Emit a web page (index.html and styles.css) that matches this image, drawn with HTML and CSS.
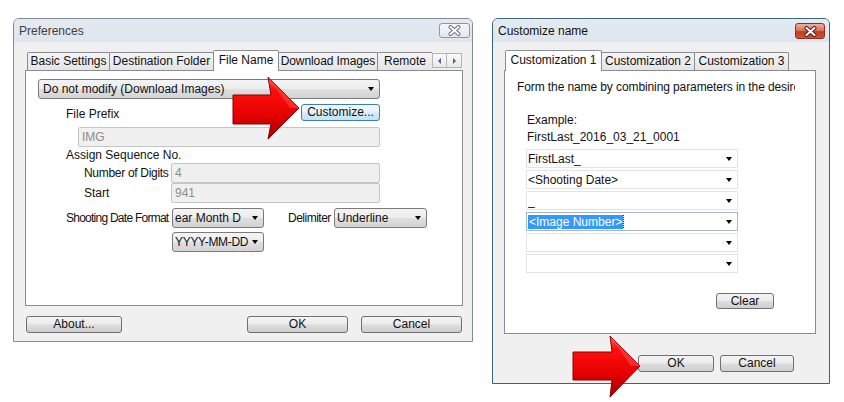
FILE: index.html
```html
<!DOCTYPE html>
<html>
<head>
<meta charset="utf-8">
<link rel="stylesheet" href="styles.css">
</head>
<body>
<div class="stage">
  <section class="win prefs">
    <header class="titlebar">
      <span class="title title-inactive">Preferences</span>
      <span class="close close-inactive">
        <svg width="13" height="11" viewBox="0 0 13 11"><path d="M2.5 2 L10.5 9 M10.5 2 L2.5 9" stroke="#6a727d" stroke-width="4" stroke-linecap="round"/><path d="M2.5 2 L10.5 9 M10.5 2 L2.5 9" stroke="#fff" stroke-width="2" stroke-linecap="round"/></svg>
      </span>
    </header>
    <div class="client prefs-client">
      <div class="tabrow">
        <div class="tabs">
          <div class="tab t-basic">Basic Settings</div>
          <div class="tab t-dest">Destination Folder</div>
          <div class="tab sel t-file">File Name</div>
          <div class="tab t-down">Download Images</div>
          <div class="tab t-remote">Remote</div>
        </div>
        <div class="scroll">
          <span class="sbtn"><i class="tri-l"></i></span>
          <span class="sbtn"><i class="tri-r"></i></span>
        </div>
      </div>
      <div class="panel prefs-panel">
        <div class="combo main-combo"><span class="txt">Do not modify (Download Images)</span><span class="arrow"></span></div>
        <div class="row-prefix">
          <span class="lbl lbl-l1">File Prefix</span>
          <div class="btn btn-focus btn-customize">Customize...</div>
        </div>
        <div class="input input-img">IMG</div>
        <div class="lbl lbl-l1 lbl-assign">Assign Sequence No.</div>
        <div class="field-row">
          <span class="lbl field-lbl tight">Number of Digits</span>
          <div class="input input-fill">4</div>
        </div>
        <div class="field-row">
          <span class="lbl field-lbl">Start</span>
          <div class="input input-fill">941</div>
        </div>
        <div class="date-row">
          <span class="lbl date-lbl">Shooting Date Format</span>
          <div class="combo small-combo"><span class="txt">ear Month D</span><span class="arrow"></span></div>
          <span class="lbl delim-lbl">Delimiter</span>
          <div class="combo delim-combo"><span class="txt">Underline</span><span class="arrow"></span></div>
        </div>
        <div class="combo small-combo date2"><span class="txt tight">YYYY-MM-DD</span><span class="arrow"></span></div>
      </div>
      <div class="btnrow prefs-btns">
        <div class="btn btn-about">About...</div>
        <span class="spacer"></span>
        <div class="btn btn-wide">OK</div>
        <div class="btn btn-wide btn-cancel">Cancel</div>
      </div>
    </div>
  </section>

  <section class="win cust">
    <header class="titlebar">
      <span class="title">Customize name</span>
      <span class="close close-active">
        <svg width="13" height="11" viewBox="0 0 13 11"><path d="M2.5 2 L10.5 9 M10.5 2 L2.5 9" stroke="#5a1a10" stroke-width="4" stroke-linecap="round"/><path d="M2.5 2 L10.5 9 M10.5 2 L2.5 9" stroke="#fff" stroke-width="2" stroke-linecap="round"/></svg>
      </span>
    </header>
    <div class="client cust-client">
      <div class="tabrow">
        <div class="tabs tabs-cust">
          <div class="tab sel t-c1">Customization 1</div>
          <div class="tab t-c2">Customization 2</div>
          <div class="tab t-c3">Customization 3</div>
        </div>
      </div>
      <div class="panel cust-panel">
        <div class="intro">Form the name by combining parameters in the desired order.</div>
        <div class="example">Example:</div>
        <div class="example example-val">FirstLast_2016_03_21_0001</div>
        <div class="clist">
          <div class="ccombo"><span class="txt">FirstLast_</span><span class="arrow"></span></div>
          <div class="ccombo"><span class="txt">&lt;Shooting Date&gt;</span><span class="arrow"></span></div>
          <div class="ccombo"><span class="txt">_</span><span class="arrow"></span></div>
          <div class="ccombo ccombo-focus"><span class="txt"><span class="hl">&lt;Image Number&gt;</span></span><span class="arrow"></span></div>
          <div class="ccombo"><span class="txt"></span><span class="arrow"></span></div>
          <div class="ccombo"><span class="txt"></span><span class="arrow"></span></div>
        </div>
        <div class="btn btn-clear">Clear</div>
      </div>
      <div class="btnrow cust-btns">
        <div class="btn btn-ok2">OK</div>
        <div class="btn btn-cancel2">Cancel</div>
      </div>
    </div>
  </section>

  <svg class="arrows" width="844" height="402" viewBox="0 0 844 402">
    <defs>
      <linearGradient id="ag" x1="0" y1="0" x2="0" y2="1">
        <stop offset="0" stop-color="#ff6a6a"/>
        <stop offset="0.2" stop-color="#ff1010"/>
        <stop offset="0.6" stop-color="#e80000"/>
        <stop offset="1" stop-color="#a00000"/>
      </linearGradient>
    </defs>
    <path d="M233 95 L271 95 L268 77 L299 108 L268 139 L271 124 L233 124 Z" fill="url(#ag)" stroke="#8a0000" stroke-width="1"/>
    <path d="M268 77 L299 108 L290 108 Z" fill="#ff5050" opacity="0.5"/>
    <path d="M573 352 L612 352 L610 336 L640 366 L610 397 L612 380 L573 380 Z" fill="url(#ag)" stroke="#8a0000" stroke-width="1"/>
    <path d="M610 336 L640 366 L631 366 Z" fill="#ff5050" opacity="0.5"/>
  </svg>
</div>
</body>
</html>
```

FILE: styles.css
```css
* { box-sizing: border-box; }

body {
  margin: 0;
  background: #fff;
  font: 12px "Liberation Sans", Arial, sans-serif;
  color: #111;
}

.stage {
  position: relative;
  width: 844px;
  height: 402px;
  overflow: hidden;
  display: flex;
  align-items: flex-start;
  gap: 19px;
  padding: 18px 0 0 13px;
}

.win {
  display: flex;
  flex-direction: column;
  border: 1px solid #838b94;
  border-radius: 6px 6px 0 0;
  background: #f0f0f0;
}
.prefs { width: 460px; height: 324px; }
.cust { width: 338px; height: 366px; border-color: #3b6579; }

.titlebar {
  height: 23px;
  flex: none;
  display: flex;
  align-items: flex-start;
  background: linear-gradient(#e4eaf1, #dde5ee);
  border-radius: 5px 5px 0 0;
}
.title { line-height: 24px; padding-left: 5px; color: #111; }
.title-inactive { color: #404040; }

.close {
  margin-left: auto;
  margin-top: 4px;
  width: 31px;
  height: 15px;
  border-radius: 3px;
  display: flex;
  align-items: center;
  justify-content: center;
}
.close-inactive {
  margin-right: 2px;
  border: 1px solid #8e97a2;
  background: linear-gradient(#f5f7f9, #e3e8ee);
}
.close-active {
  margin-right: 4px;
  width: 30px;
  height: 16px;
  border: 1px solid #8b3020;
  background: linear-gradient(#eab1a3 0%, #d9745f 45%, #c43c22 55%, #c9553a 100%);
}

.client {
  flex: 1;
  display: flex;
  flex-direction: column;
  padding: 8px 9px 0 11px;
}
.cust-client { padding: 8px 13px 0 11px; }

.tabrow {
  display: flex;
  height: 21px;
  margin-bottom: -1px;
  position: relative;
  z-index: 1;
}
.tabs {
  flex: 1;
  display: flex;
  align-items: flex-end;
  overflow: hidden;
  padding-left: 2px;
}
.tabs-cust { padding-left: 1px; }

.tab {
  flex: none;
  height: 18px;
  margin-bottom: 1px;
  margin-left: -1px;
  border: 1px solid #898c95;
  border-bottom: 0;
  border-radius: 2px 2px 0 0;
  background: linear-gradient(#f5f5f5, #e4e4e4);
  line-height: 17px;
  text-align: center;
  white-space: nowrap;
  overflow: hidden;
}
.tab:first-child { margin-left: 0; }
.tab.sel {
  height: 21px;
  margin-bottom: 0;
  background: #fff;
  line-height: 18px;
}
.t-basic { width: 83px; }
.t-dest { width: 105px; }
.t-file { width: 66px; }
.t-down { width: 100px; letter-spacing: -0.1px; }
.t-remote { width: 60px; text-align: left; padding-left: 6px; }
.t-c1 { width: 97px; }
.t-c2 { width: 94px; }
.t-c3 { width: 95px; }

.scroll {
  flex: none;
  display: flex;
  align-items: flex-start;
  padding-top: 3px;
  padding-right: 1px;
}
.sbtn {
  width: 15px;
  height: 15px;
  border: 1px solid #b5b5b5;
  background: linear-gradient(#fafafa, #e8e8e8);
  display: flex;
  align-items: center;
  justify-content: center;
}
.sbtn + .sbtn { border-left: 0; }
.tri-l, .tri-r { width: 0; height: 0; border-top: 3px solid transparent; border-bottom: 3px solid transparent; }
.tri-l { border-right: 3px solid #4a6388; }
.tri-r { border-left: 3px solid #4a6388; }

.panel {
  border: 1px solid #898c95;
  background: #fff;
  display: flex;
  flex-direction: column;
  align-items: flex-start;
}
.prefs-panel { height: 236px; padding: 8px 0 0 12px; }
.cust-panel { height: 264px; padding: 9px 0 0 12px; }

.lbl { white-space: nowrap; }
.tight { letter-spacing: -0.3px; }

.combo {
  display: flex;
  align-items: center;
  height: 20px;
  border: 1px solid #7a7a7a;
  border-radius: 3px;
  background: linear-gradient(#f4f4f4 0%, #ececec 48%, #dfdfdf 52%, #d3d3d3 100%);
  padding: 0 5px 0 4px;
  white-space: nowrap;
  overflow: hidden;
  color: #111;
}
.combo .txt, .ccombo .txt { flex: 1; overflow: hidden; white-space: nowrap; }
.arrow {
  flex: none;
  width: 0;
  height: 0;
  border-left: 3.5px solid transparent;
  border-right: 3.5px solid transparent;
  border-top: 4px solid #000;
}
.main-combo { width: 342px; }

.row-prefix {
  width: 342px;
  height: 18px;
  margin-top: 4px;
  display: flex;
  align-items: flex-end;
  justify-content: space-between;
}
.lbl-l1 { padding-left: 28px; line-height: 14px; }
.lbl-assign { line-height: 16px; }

.btn {
  height: 17px;
  border: 1px solid #707070;
  border-radius: 3px;
  background: linear-gradient(#f4f4f4 0%, #ebebeb 48%, #dddddd 52%, #cfcfcf 100%);
  text-align: center;
  line-height: 15px;
  white-space: nowrap;
  color: #111;
}
.btn-focus {
  border-color: #3c7fb1;
  background: linear-gradient(#f3f9fd 0%, #e6f2fb 48%, #d4eaf8 52%, #c6e2f5 100%);
}
.btn-customize { width: 79px; }

.input {
  height: 20px;
  border: 1px solid #c6c6c6;
  border-radius: 2px;
  background: #f0f0f0;
  color: #8c8c8c;
  padding-left: 3px;
  line-height: 18px;
}
.input-img { width: 302px; margin-top: 6px; margin-left: 40px; }
.field-row { display: flex; align-items: center; width: 342px; height: 20px; }
.field-lbl { width: 133px; padding-left: 46px; }
.input-fill { flex: 1; }

.date-row { display: flex; align-items: center; height: 20px; margin-top: 5px; }
.date-lbl { width: 134px; padding-left: 28px; letter-spacing: -0.75px; }
.small-combo { width: 92px; padding-left: 2px; }
.delim-lbl { width: 46px; margin-left: 24px; letter-spacing: -0.5px; }
.delim-combo { width: 93px; padding-left: 2px; }
.date2 { margin-top: 4px; margin-left: 134px; }

.btnrow { display: flex; height: 17px; }
.prefs-btns { margin-top: 10px; padding: 0 1px; }
.spacer { flex: 1; }
.btn-about { width: 96px; }
.btn-wide { width: 101px; }
.btn-cancel { margin-left: 13px; }

.intro { width: 278px; overflow: hidden; white-space: nowrap; line-height: 15px; letter-spacing: -0.1px; }
.example { margin-left: 10px; line-height: 16px; margin-top: 17px; }
.example-val { margin-top: 1px; }
.clist { margin-top: 4px; margin-left: 9px; display: flex; flex-direction: column; gap: 2px; }
.ccombo {
  width: 212px;
  height: 19px;
  display: flex;
  align-items: center;
  border: 1px solid #e2e3e6;
  background: #fff;
  padding: 0 5px 0 1px;
  color: #111;
}
.ccombo-focus { border-color: #a7b6c8; }
.hl { background: #3399ff; color: #fff; padding: 0 1px; outline: 1px dotted #1a3d6a; }
.btn-clear { width: 58px; height: 16px; margin-top: 20px; margin-left: 199px; line-height: 14px; }

.cust-btns { margin-top: 21px; justify-content: flex-end; gap: 6px; padding-right: 22px; }
.btn-ok2 { width: 76px; }
.btn-cancel2 { width: 74px; }

.arrows { position: absolute; left: 0; top: 0; pointer-events: none; }
```
